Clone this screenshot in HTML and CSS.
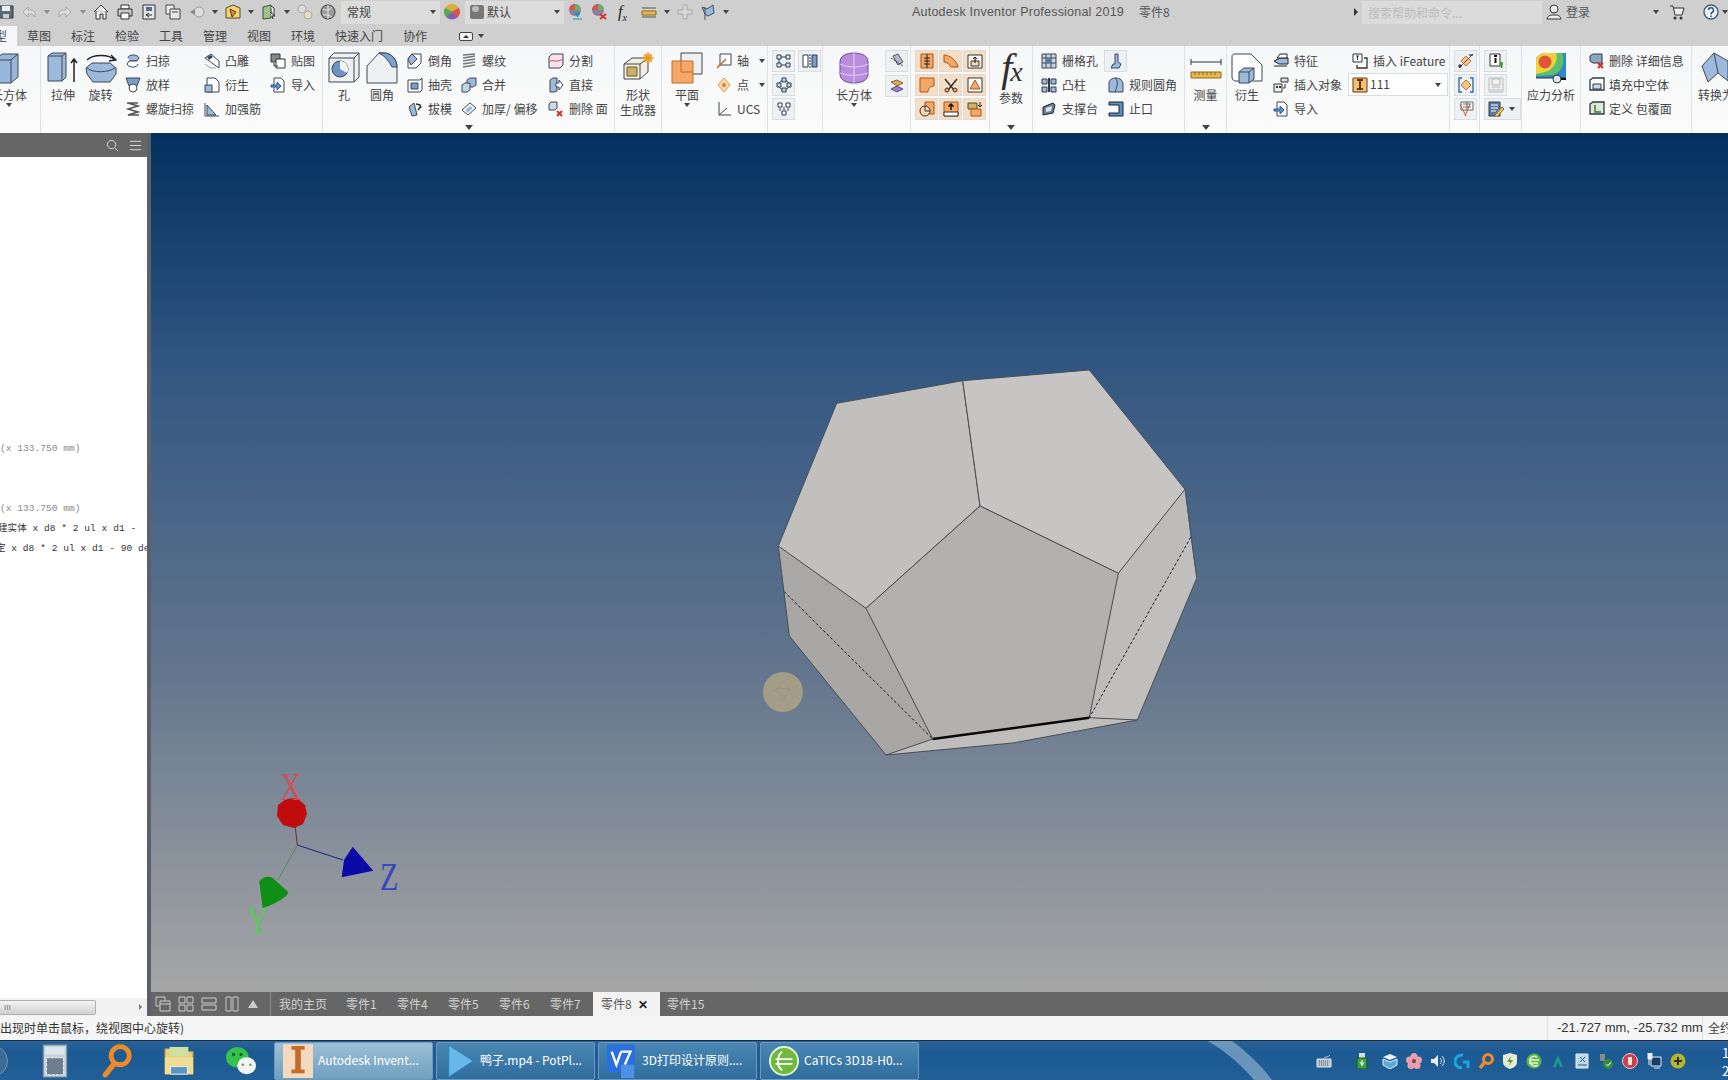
FILE: index.html
```html
<!DOCTYPE html>
<html lang="zh">
<head>
<meta charset="utf-8">
<title>Autodesk Inventor Professional 2019</title>
<link rel="stylesheet" href="styles.css">
</head>
<body>
<svg class="defs" xmlns="http://www.w3.org/2000/svg">
<defs>
<symbol id="save" viewBox="0 0 16 16"><path d="M1 2h14v12H1z" fill="#5d6a78" stroke="#333"/><path d="M4 2h8v5H4z" fill="#eee"/><path d="M5 10h6v4H5z" fill="#ccc"/></symbol>
<symbol id="undo" viewBox="0 0 16 16"><path d="M7 3L2 8l5 5v-3h4l3 3V8l-3-2H7z" fill="#ddd" stroke="#a9a9a9"/></symbol>
<symbol id="redo" viewBox="0 0 16 16"><path d="M9 3l5 5-5 5v-3H5l-3 3V8l3-2h4z" fill="#ddd" stroke="#a9a9a9"/></symbol>
<symbol id="home" viewBox="0 0 16 16"><path d="M1 8l7-7 7 7M3 7v8h4v-5h3v5h3V7" fill="#eee" stroke="#3b3b3b"/></symbol>
<symbol id="print" viewBox="0 0 16 16"><path d="M4 1h8v4H4z" fill="#fff" stroke="#333"/><path d="M1 5h14v7H1z" fill="#c9c9c9" stroke="#333"/><path d="M4 9h8v6H4z" fill="#fff" stroke="#333"/></symbol>
<symbol id="pages" viewBox="0 0 16 16"><path d="M2 1h12v14H2z" fill="#e6e6e6" stroke="#333"/><path d="M5 3h6v4H5z" fill="#4c7096"/><path d="M5 11h6M8 9l-3 2 3 2" fill="none" stroke="#333"/></symbol>
<symbol id="copies" viewBox="0 0 16 16"><path d="M1 1h8v9H1z" fill="#eee" stroke="#444"/><path d="M5 5h10v10H5z" fill="#e6e6e6" stroke="#444"/><path d="M7 8h6" stroke="#444"/></symbol>
<symbol id="orbit" viewBox="0 0 16 16"><circle cx="10" cy="8" r="5" fill="#ddd" stroke="#999"/><path d="M1 8l5-3v6z" fill="#888"/></symbol>
<symbol id="open" viewBox="0 0 16 16"><path d="M1 4l7-3 7 3v10H1z" fill="#f2d37a" stroke="#5d4a20"/><path d="M5 5l6 3-4 5z" fill="#e6892e" stroke="#5d3a10"/></symbol>
<symbol id="docs" viewBox="0 0 16 16"><path d="M2 3l8-2v13l-8 1z" fill="#9fc38a" stroke="#3c4d36"/><path d="M10 2l3 2v8M9 8l5 4-3 0 1 3" fill="#fff" stroke="#333"/></symbol>
<symbol id="nodes" viewBox="0 0 16 16"><circle cx="5" cy="5" r="4" fill="#ddd" stroke="#aaa"/><circle cx="11" cy="11" r="4" fill="#e6e0c6" stroke="#aaa"/></symbol>
<symbol id="globe" viewBox="0 0 16 16"><circle cx="8" cy="8" r="7" fill="#9a9a9a" stroke="#333"/><path d="M3 5c3 2 7 1 9-2M3 11c3-1 7 1 9 2M8 1v14" fill="none" stroke="#e8e8e8"/></symbol>
<symbol id="wheel" viewBox="0 0 16 16"><circle cx="8" cy="8" r="7.500" fill="#7c62b5"/><path d="M8 8L1 4a8 8 0 0 1 14 0z" fill="#d8b03e"/><path d="M8 8l7-4a8 8 0 0 1-2 10z" fill="#d9524c"/><path d="M8 8L1 4a8 8 0 0 0 1 9z" fill="#58a85a"/></symbol>
<symbol id="sphere" viewBox="0 0 16 16"><rect x="1" y="1" width="14" height="14" rx="2" fill="#777"/><rect x="3" y="2" width="7" height="6" rx="3" fill="#bbb"/></symbol>
<symbol id="ball" viewBox="0 0 16 16"><circle cx="7" cy="6" r="6" fill="#8a7fa0"/><path d="M1 6a6 6 0 0 1 6-6v6z" fill="#d9524c"/><path d="M7 0a6 6 0 0 1 6 6H7z" fill="#6bb06a"/><path d="M7 9l5 0-2.500 4zM5 15h9" fill="#2a8fb0" stroke="#2a8fb0"/></symbol>
<symbol id="ballx" viewBox="0 0 16 16"><circle cx="7" cy="6" r="6" fill="#8a7fa0"/><path d="M1 6a6 6 0 0 1 6-6v6z" fill="#d9524c"/><path d="M7 0a6 6 0 0 1 6 6H7z" fill="#6bb06a"/><path d="M9 10l6 5M15 10l-6 5" stroke="#d43030" stroke-width="2"/></symbol>
<symbol id="rule" viewBox="0 0 16 16"><path d="M1 4h14M1 13h14" stroke="#555"/><path d="M1 7h14v4H1z" fill="#e7b94d" stroke="#8a6a20"/></symbol>
<symbol id="plus" viewBox="0 0 16 16"><path d="M6 1h4v5h5v4h-5v5H6v-5H1V6h5z" fill="#d8d8d8" stroke="#a7a7a7"/></symbol>
<symbol id="flag" viewBox="0 0 16 16"><path d="M2 3l5 2 6-4 1 8-6 3-3-2z" fill="#9dbbdb" stroke="#3e4f60"/><path d="M5 3v13" stroke="#3e4f60"/></symbol>
<symbol id="user" viewBox="0 0 16 16"><circle cx="8" cy="5" r="4" fill="#eee" stroke="#333"/><path d="M1 15c1-4 4-4 7-4s6 0 7 4z" fill="#eee" stroke="#333"/></symbol>
<symbol id="cart" viewBox="0 0 16 16"><path d="M1 2h3l2 9h7l2-7H5" fill="#eee" stroke="#333"/><circle cx="6" cy="14" r="1.500" fill="#333"/><circle cx="12" cy="14" r="1.500" fill="#333"/></symbol>
<symbol id="help" viewBox="0 0 16 16"><circle cx="8" cy="8" r="7" fill="#eef3f8" stroke="#3f5a78" stroke-width="1.400"/><path d="M5.500 6a2.500 2.500 0 1 1 3.500 2.500c-1 .5-1 1-1 2" fill="none" stroke="#2a517c" stroke-width="1.500"/><path d="M8 11.500v1.500" stroke="#2a517c" stroke-width="1.500"/></symbol>
<symbol id="sweep" viewBox="0 0 16 16"><path d="M3 5c0-4 10-4 11 0l-2 3H5" fill="#9db9dc" stroke="#3d4753"/><path d="M13 11c0 4-10 4-11 0l2-3h8" fill="#fff" stroke="#3d4753"/></symbol>
<symbol id="loft" viewBox="0 0 16 16"><path d="M1 1h14l-3 8H4z" fill="#7d9dc8" stroke="#3d4753"/><circle cx="8" cy="11" r="4" fill="#fff" stroke="#3d4753"/></symbol>
<symbol id="coil" viewBox="0 0 16 16"><path d="M2 2h11M3 2l10 3-10 3 10 3-10 3h11" fill="none" stroke="#555" stroke-width="1.500"/></symbol>
<symbol id="emboss" viewBox="0 0 16 16"><path d="M1 5l6-4 8 7v7z" fill="#fff" stroke="#3d4753"/><path d="M3 4l4-2 2 2-4 3z" fill="#34495f"/><path d="M1 11l5 4h6" fill="#dfe7f0" stroke="#aaa"/></symbol>
<symbol id="derive" viewBox="0 0 16 16"><path d="M3 1h8l4 4v10H3z" fill="#fff" stroke="#3d4753"/><path d="M1 8h7v7H1z" fill="#9db9dc" stroke="#3d4753"/></symbol>
<symbol id="rib" viewBox="0 0 16 16"><path d="M1 2v13h14" fill="#fff" stroke="#3d4753"/><path d="M3 14V4l9 10z" fill="#9db9dc" stroke="#3d4753"/></symbol>
<symbol id="decal" viewBox="0 0 16 16"><path d="M1 1h9v8H1z" fill="#888" stroke="#333"/><path d="M6 6h9v9H6z" fill="#fff" stroke="#333"/><path d="M4 10v3h4" fill="none" stroke="#333"/></symbol>
<symbol id="import" viewBox="0 0 16 16"><path d="M4 1h7l3 3v11H4z" fill="#fff" stroke="#3d4753"/><path d="M1 8h6V5l4 4-4 4v-3H1z" fill="#5a90cc" stroke="#2c5a8e"/></symbol>
<symbol id="chamfer" viewBox="0 0 16 16"><path d="M5 1h9v9l-5 5H1V6z" fill="#fff" stroke="#3d4753"/><path d="M5 1l5 5-6 6-3-6z" fill="#9db9dc" stroke="#3d4753"/></symbol>
<symbol id="shell" viewBox="0 0 16 16"><path d="M1 3h12l2-2v12l-2 2H1z" fill="#fff" stroke="#3d4753"/><path d="M4 6h7v6H4z" fill="#7d9dc8" stroke="#3d4753"/></symbol>
<symbol id="draft" viewBox="0 0 16 16"><path d="M2 6l5-4 3 12-5 1z" fill="#9db9dc" stroke="#3d4753"/><path d="M11 9l3-4M9 3l4 1 1 3" fill="none" stroke="#333" stroke-width="1.500"/></symbol>
<symbol id="thread" viewBox="0 0 16 16"><path d="M2 2l12-1M2 5l12-2M2 8l12-2M2 11l12-2M2 14l12-2" stroke="#777" stroke-width="1.500"/></symbol>
<symbol id="combine" viewBox="0 0 16 16"><path d="M6 3l3-2h6v7l-3 2H6z" fill="#9db9dc" stroke="#3d4753"/><path d="M1 8l3-2h5v7l-3 2H1z" fill="#c2d4ea" stroke="#3d4753"/></symbol>
<symbol id="thick" viewBox="0 0 16 16"><path d="M1 9l8-7 6 5-8 7z" fill="#fff" stroke="#3d4753"/><path d="M4 9l5-4 3 2-5 5z" fill="#9db9dc"/></symbol>
<symbol id="split" viewBox="0 0 16 16"><path d="M1 4l3-3h11v11l-3 3H1z" fill="#f6e3ea" stroke="#3d4753"/><path d="M1 9c4-4 6 2 14-3" fill="none" stroke="#c0506a"/></symbol>
<symbol id="direct" viewBox="0 0 16 16"><path d="M2 3l3-2h4v13l-3 1H2z" fill="#9db9dc" stroke="#3d4753"/><path d="M8 6h3V3l4 5-4 5v-3H8z" fill="#fff" stroke="#3d4753"/></symbol>
<symbol id="delface" viewBox="0 0 16 16"><path d="M1 3l2-2h6v6l-2 2H1z" fill="#c9d8ea" stroke="#3d4753"/><path d="M9 10l5 5M14 10l-5 5" stroke="#d43030" stroke-width="2"/></symbol>
<symbol id="axis" viewBox="0 0 16 16"><path d="M4 1h11v11H4z" fill="#fff" stroke="#3d4753"/><path d="M1 15l9-9" stroke="#c9622a" stroke-width="1.500"/></symbol>
<symbol id="point" viewBox="0 0 16 16"><path d="M8 1l6 7-6 7-6-7z" fill="#fad9b2" stroke="#e39a4a"/><circle cx="8" cy="8" r="2" fill="#d9822e"/></symbol>
<symbol id="ucs" viewBox="0 0 16 16"><path d="M3 1v13h12M3 14l8-7" fill="none" stroke="#3d4753"/></symbol>
<symbol id="grid" viewBox="0 0 16 16"><path d="M1 1h14v14H1z" fill="#c9d4e2" stroke="#3d4753"/><path d="M1 5h14M1 10h14M5 1v14M10 1v14" stroke="#3d4753"/><path d="M5 5h5v5H5z" fill="#5a7aa6"/></symbol>
<symbol id="boss" viewBox="0 0 16 16"><path d="M1 2h5v5H1zM10 2h5v5h-5zM1 10h5v5H1zM10 10h5v5h-5z" fill="#9db9dc" stroke="#2e3b4a"/><path d="M8 1v14" stroke="#2e3b4a" stroke-width="2"/></symbol>
<symbol id="rest" viewBox="0 0 16 16"><path d="M2 6l10-4 2 2-2 8-10 2z" fill="#6c7f96" stroke="#222"/><path d="M5 7l6-2-1 5-5 1z" fill="#dfe7f0"/></symbol>
<symbol id="rule2" viewBox="0 0 16 16"><path d="M1 6c0-3 3-5 7-5s7 3 7 6v8H1z" fill="#9db9dc" stroke="#3d4753"/><path d="M7 1c3 2 3 7 0 14" fill="none" stroke="#3d4753"/></symbol>
<symbol id="lip" viewBox="0 0 16 16"><path d="M1 1h14v14H1v-3h10V4H1z" fill="#5a90cc" stroke="#222"/></symbol>
<symbol id="hand" viewBox="0 0 16 16"><path d="M7 1h3v8l3 2-2 4H3l2-4h2z" fill="#9db9dc" stroke="#2d4b6d"/></symbol>
<symbol id="feat" viewBox="0 0 16 16"><path d="M1 8l6-3h8v6H6z" fill="#9db9dc" stroke="#222"/><path d="M4 5l3-4h7v4z" fill="#fff" stroke="#222"/><path d="M1 13h13" stroke="#222"/></symbol>
<symbol id="insobj" viewBox="0 0 16 16"><path d="M1 7h8v8H1z" fill="#eee" stroke="#333"/><path d="M3 9h2v2H3zM6 9h2v2H6z" fill="#333"/><path d="M8 1h7v4H8z" fill="#ddd" stroke="#333"/><path d="M12 7v4h-2" fill="none" stroke="#333"/></symbol>
<symbol id="ifeat" viewBox="0 0 16 16"><path d="M1 1h9v8H1z" fill="#fff" stroke="#333"/><path d="M4 3h3M5.500 3v4" stroke="#333"/><path d="M12 5h3v10H5v-3" fill="none" stroke="#333" stroke-width="1.300"/></symbol>
<symbol id="doc-i" viewBox="0 0 16 16"><path d="M1 1h14v14H1z" fill="#f2c079" stroke="#5d3a10"/><path d="M5 3h6M8 3v9M5 12h6" stroke="#6b3a15" stroke-width="2"/></symbol>
<symbol id="delinfo" viewBox="0 0 16 16"><path d="M1 3l3-2h9v9H4L1 8z" fill="#8fa6bf" stroke="#2e3b4a"/><path d="M9 10l5 5M14 10l-5 5" stroke="#d43030" stroke-width="2"/></symbol>
<symbol id="fill" viewBox="0 0 16 16"><path d="M1 3l3-2h11v12H1z" fill="#fff" stroke="#2e3b4a" stroke-width="1.300"/><path d="M4 7h8v5H4z" fill="#c9d8ea" stroke="#2e3b4a"/></symbol>
<symbol id="wrap" viewBox="0 0 16 16"><path d="M1 3l3-2h11v12H1z" fill="#e0e9d8" stroke="#2e3b4a" stroke-width="1.300"/><path d="M6 4v7h6" fill="none" stroke="#3c7a2d" stroke-width="1.500"/></symbol>
<symbol id="b-box" viewBox="0 0 32 32"><path d="M2 8l7-6h16v23l-7 6H2z" fill="#98b6da" stroke="#3d4753"/><path d="M2 8h16v23M18 8l7-6" fill="none" stroke="#3d4753"/></symbol>
<symbol id="b-ext" viewBox="0 0 32 32"><path d="M1 4l4-3h14v24l-4 4H1z" fill="#9db9dc" stroke="#3d4753"/><path d="M1 4h14v25M15 4l4-3" fill="none" stroke="#3d4753"/><path d="M27 30V8M24 11l3-4 3 4" fill="none" stroke="#222" stroke-width="1.500"/></symbol>
<symbol id="b-rev" viewBox="0 0 32 32"><path d="M1 16l6-5h18l6 5v6l-6 8H8l-6-8z" fill="#9db9dc" stroke="#3d4753"/><path d="M2 16c6 5 20 5 28 0" fill="none" stroke="#3d4753"/><path d="M2 8c6-6 22-6 28 0M26 3l5 5-7 1" fill="none" stroke="#222" stroke-width="1.300"/></symbol>
<symbol id="b-hole" viewBox="0 0 32 32"><path d="M1 6l5-5h25v24l-5 5H1z" fill="#eef0f3" stroke="#3d4753"/><path d="M1 6h25v24M26 6l5-5" fill="none" stroke="#3d4753"/><circle cx="12" cy="17" r="8" fill="#6f94c4" stroke="#3d4753"/><path d="M12 17V9a8 8 0 0 1 7 12z" fill="#f0f3f7"/></symbol>
<symbol id="b-fil" viewBox="0 0 32 32"><path d="M1 14L13 1h5c7 0 13 6 13 14v16H1z" fill="#eef0f3" stroke="#3d4753"/><path d="M13 1c6 3 10 8 13 14l5 0c0-8-6-14-13-14z" fill="#7fa3d1" stroke="#3d4753"/></symbol>
<symbol id="b-gen" viewBox="0 0 32 32"><path d="M2 12l8-6h16v14l-8 7H2z" fill="#f2efe0" stroke="#3d4753"/><path d="M2 12h16v15M18 12l8-6" fill="none" stroke="#3d4753"/><path d="M5 15h10v9H5z" fill="#c9b26a" stroke="#6a5a20"/><circle cx="26" cy="6" r="4.500" fill="#f5b13e"/><path d="M26 0v12M20 6h12M22 2l8 8M30 2l-8 8" stroke="#e8902a"/></symbol>
<symbol id="b-plane" viewBox="0 0 32 32"><path d="M10 1h21v21H10z" fill="#eef0f3" stroke="#3d4753"/><path d="M1 9h21v22H1z" fill="#f3a869" stroke="#c36f2a"/><path d="M10 9v11h12" fill="none" stroke="#c36f2a"/></symbol>
<symbol id="b-prim" viewBox="0 0 32 32"><path d="M2 10c0-6 6-9 14-9s14 3 14 9v12c0 6-6 9-14 9s-14-3-14-9z" fill="#b98ddd" stroke="#6b4a90"/><path d="M2 12c8 4 20 4 28 0M2 21c8 3 20 3 28 0M16 1v30" fill="none" stroke="#e6d2f3"/></symbol>
<symbol id="b-meas" viewBox="0 0 32 32"><path d="M1 10h30M1 7v6M31 7v6" stroke="#333" fill="none"/><path d="M1 20h30v6H1z" fill="#e6b84c" stroke="#8a6a20"/><path d="M5 20v3M9 20v3M13 20v3M17 20v3M21 20v3M25 20v3" stroke="#8a6a20"/></symbol>
<symbol id="b-der" viewBox="0 0 32 32"><path d="M1 5c0-2 1-3 3-3h16l11 11v16H5c-2 0-4-1-4-4z" fill="#fff" stroke="#3d4753"/><path d="M8 20l5-4h10v11l-5 4H8z" fill="#9db9dc" stroke="#3d4753"/><path d="M8 20h10v11M18 20l5-4" fill="none" stroke="#3d4753"/></symbol>
<symbol id="b-str" viewBox="0 0 32 32"><path d="M1 6l6-5h24v25H1z" fill="#2f86c9"/><path d="M1 24V6l6-5h20c4 8 0 18-8 22z" fill="#5cc06a"/><path d="M1 22V6l6-5h14c3 7-3 17-11 19z" fill="#ecd23c"/><circle cx="10" cy="10" r="6.500" fill="#e2543a"/><path d="M1 26h30" stroke="#333"/><circle cx="22" cy="27" r="4" fill="#dfe7f0" stroke="#333"/><path d="M26 27h5" stroke="#111" stroke-width="2"/></symbol>
<symbol id="b-conv" viewBox="0 0 32 32"><path d="M2 14L14 1l14 8v20l-10-8-10 9z" fill="#9db9dc" stroke="#3d4753"/><path d="M14 1l4 20" stroke="#3d4753"/></symbol>
<symbol id="t-a" viewBox="0 0 16 16"><path d="M1 2h4v4H1zM10 2h4v4h-4zM1 10h4v4H1zM10 10h4v4h-4z" fill="#dfe7f0" stroke="#2e3b4a"/><path d="M5 4h5M3 6v4M5 12h5" stroke="#2e3b4a"/></symbol>
<symbol id="t-b" viewBox="0 0 16 16"><path d="M1 2h5v12H1z" fill="#fff" stroke="#2e3b4a"/><path d="M10 2h5v12h-5z" fill="#7d9dc8" stroke="#2e3b4a"/><path d="M8 1v14" stroke="#2e3b4a" stroke-dasharray="2 1"/></symbol>
<symbol id="t-c" viewBox="0 0 16 16"><circle cx="8" cy="8" r="5" fill="none" stroke="#2e3b4a"/><path d="M6 1h4v4H6zM1 6h4v4H1zM11 6h4v4h-4zM6 11h4v4H6z" fill="#c2d4ea" stroke="#2e3b4a"/></symbol>
<symbol id="t-d" viewBox="0 0 16 16"><path d="M2 2h4v4H2zM10 2h4v4h-4zM6 10h4v4H6z" fill="#fff" stroke="#2e3b4a"/><path d="M4 7v3M12 7v3M8 6v3" stroke="#2e3b4a"/></symbol>
<symbol id="t-e" viewBox="0 0 16 16"><path d="M4 3l5-2 5 8-5 3z" fill="#b9b3d8" stroke="#555"/><path d="M2 5l12 8" stroke="#333" stroke-dasharray="2 1"/></symbol>
<symbol id="t-f" viewBox="0 0 16 16"><path d="M2 4l6-2 6 3-6 3z" fill="#d8a85c" stroke="#8a6a20"/><path d="M2 11l6-3 6 3-6 3z" fill="#9a80c8" stroke="#5d4a80"/></symbol>
<symbol id="g1" viewBox="0 0 16 16"><path d="M2 1h12v14H2z" fill="#f3a869" stroke="#a5591a"/><path d="M8 1v14M5 5h6M5 8h6M5 11h6" stroke="#222"/></symbol>
<symbol id="g2" viewBox="0 0 16 16"><path d="M1 2c6 0 13 6 14 12H8c-1-2-4-5-7-5z" fill="#f3a869" stroke="#a5591a"/></symbol>
<symbol id="g3" viewBox="0 0 16 16"><path d="M1 2h14v13H1z" fill="#fff" stroke="#333"/><path d="M4 8h8v5H4z" fill="#fad9b2" stroke="#333"/><path d="M8 10V4M6 6l2-2 2 2" fill="none" stroke="#111"/></symbol>
<symbol id="g4" viewBox="0 0 16 16"><path d="M1 1h14v8c-3 0-6 2-6 6H1z" fill="#f3a869" stroke="#a5591a"/></symbol>
<symbol id="g5" viewBox="0 0 16 16"><path d="M2 2l9 11M14 2L5 13" stroke="#333" stroke-width="1.500"/><circle cx="4" cy="13" r="2" fill="#f3a869" stroke="#333"/><circle cx="12" cy="13" r="2" fill="#f3a869" stroke="#333"/></symbol>
<symbol id="g6" viewBox="0 0 16 16"><path d="M1 1h14v14H1z" fill="#fff" stroke="#333"/><path d="M8 3l5 9H3z" fill="#f3a869" stroke="#a5591a"/></symbol>
<symbol id="g7" viewBox="0 0 16 16"><path d="M6 1h9v12H6z" fill="#f3a869" stroke="#a5591a"/><circle cx="6" cy="10" r="5" fill="#fad9b2" stroke="#333"/><path d="M6 5v5h5" stroke="#333" fill="none"/></symbol>
<symbol id="g8" viewBox="0 0 16 16"><path d="M1 1h14v14H1z" fill="#f3a869" stroke="#a5591a"/><path d="M1 11h14V15H1z" fill="#fff" stroke="#333"/><path d="M8 9V3M5.500 5.500L8 3l2.500 2.500" stroke="#111" fill="none" stroke-width="1.500"/></symbol>
<symbol id="g9" viewBox="0 0 16 16"><path d="M1 2h9v6H1z" fill="#c9b26a" stroke="#5d4a20"/><path d="M4 8h10v7H4z" fill="#f3a869" stroke="#a5591a"/><path d="M13 1v5M11 4l2 2 2-2" stroke="#222" fill="none"/></symbol>
<symbol id="h1" viewBox="0 0 16 16"><path d="M8 3l5 5-5 5-5-5z" fill="#f3c48a" stroke="#c36f2a"/><path d="M1 15l14-14" stroke="#555"/><path d="M2 11v4M0 13h4M11 2h4" stroke="#111"/></symbol>
<symbol id="h2" viewBox="0 0 16 16"><path d="M8 3l5 5-5 5-5-5z" fill="#f3c48a" stroke="#c36f2a"/><path d="M4 1H1v14h3M12 1h3v14h-3" fill="none" stroke="#2a64a0" stroke-width="1.300"/></symbol>
<symbol id="h3" viewBox="0 0 16 16"><path d="M3 1h12v8H3z" fill="#fff" stroke="#666"/><path d="M5 3h8M5 6h8M9 1v8" stroke="#666"/><path d="M2 3l6 12M12 3L7 15" stroke="#c9622a"/></symbol>
<symbol id="h4" viewBox="0 0 16 16"><path d="M2 1h10v12H2z" fill="#fff" stroke="#333"/><path d="M6 3h3M7.500 5v5" stroke="#111" stroke-width="2"/><path d="M12 11h3M13.500 9v6" stroke="#3a9a2a" stroke-width="2"/></symbol>
<symbol id="h5" viewBox="0 0 16 16"><path d="M1 1h14v14H1z" fill="#eee" stroke="#bbb"/><path d="M4 2h8v6H4zM4 10h8M2 13h12" fill="none" stroke="#bbb"/></symbol>
<symbol id="h6" viewBox="0 0 16 16"><path d="M1 1h11v14H1z" fill="#5a7aa6" stroke="#2e3b4a"/><path d="M3 4h7M3 7h7M3 10h5" stroke="#fff"/><path d="M7 14l7-8 2 2-7 8H7z" fill="#f0c36a" stroke="#8a6a20"/></symbol>
<symbol id="tb1" viewBox="0 0 16 16"><path d="M1 1h9v9H1z" fill="none" stroke="#ccc"/><path d="M5 5h10v10H5z" fill="#666" stroke="#ccc"/><path d="M5 8h10" stroke="#ccc"/></symbol>
<symbol id="tb2" viewBox="0 0 16 16"><path d="M1 1h6v6H1zM9 1h6v6H9zM1 9h6v6H1zM9 9h6v6H9z" fill="none" stroke="#ccc"/></symbol>
<symbol id="tb3" viewBox="0 0 16 16"><path d="M1 2h14v5H1zM1 9h14v5H1z" fill="none" stroke="#ccc"/></symbol>
<symbol id="tb4" viewBox="0 0 16 16"><path d="M2 1h5v14H2zM9 1h5v14H9z" fill="none" stroke="#ccc"/></symbol>
<symbol id="calc" viewBox="0 0 24 32"><path d="M1 1h22v30H1z" fill="#c7d3dd" stroke="#7e8d99"/><path d="M3 3h18v7H3z" fill="#dbe7ef"/><path d="M4 13h16v16H4z" fill="#6d7f8e" stroke="#e8edf1" stroke-dasharray="3 1" stroke-width="1"/></symbol>
<symbol id="lens" viewBox="0 0 28 32"><circle cx="17" cy="11" r="8.500" fill="none" stroke="#ef8a26" stroke-width="4.500"/><path d="M11 19L3 29" stroke="#ef8a26" stroke-width="5" stroke-linecap="round"/></symbol>
<symbol id="folder" viewBox="0 0 32 32"><path d="M1 3h12l2 3h16v24H1z" fill="#e9cf80" stroke="#a89550"/><path d="M6 1h20v10H6z" fill="#cfe0a0"/><path d="M1 12h30v18H1z" fill="#f1dc96"/><path d="M7 22h18v8H7z" fill="#5d93c0" stroke="#e8f0f6"/></symbol>
<symbol id="wechat" viewBox="0 0 32 32"><ellipse cx="12" cy="12" rx="12" ry="11" fill="#36c24a"/><ellipse cx="22" cy="21" rx="10" ry="9" fill="#f2f4f2"/><circle cx="8" cy="9" r="1.800" fill="#12652a"/><circle cx="16" cy="9" r="1.800" fill="#12652a"/><circle cx="18" cy="20" r="1.400" fill="#8a8a8a"/><circle cx="26" cy="20" r="1.400" fill="#8a8a8a"/></symbol>
<symbol id="inv" viewBox="0 0 32 36"><path d="M0 0h32v36H0z" fill="#f3d9be"/><path d="M9 2h14v4h-4v21h4v4H9v-4h4V6H9z" fill="#c46a2a"/></symbol>
<symbol id="play" viewBox="0 0 32 36"><path d="M4 1l26 17L4 35z" fill="#69b8ea" stroke="#2d7fc0"/></symbol>
<symbol id="wps" viewBox="0 0 32 36"><rect width="30" height="30" rx="3" fill="#2a6fe0"/><path d="M5 8l5 14 5-14M15 8h10l-6 14" fill="none" stroke="#fff" stroke-width="2.500"/><path d="M15 22h14v14H15z" fill="#4d90e8"/></symbol>
<symbol id="cat" viewBox="0 0 32 32"><circle cx="16" cy="16" r="15" fill="#71b93c" stroke="#e8f3d8" stroke-width="2"/><path d="M7 14h18M7 19h18M14 6c-6 5-6 15 0 20" fill="none" stroke="#fff" stroke-width="2"/></symbol>
<symbol id="kbd" viewBox="0 0 16 16"><path d="M1 6h14v8H1z" fill="#b4c2cd" stroke="#dce5ea"/><path d="M3 8h10M3 10h10M3 12h10" stroke="#5c6b76" stroke-dasharray="1 1"/><path d="M8 6c0-3 4-1 6-4" fill="none" stroke="#c4cdd4"/></symbol>
<symbol id="usb" viewBox="0 0 16 16"><path d="M5 0h6v5H5z" fill="#ddd"/><path d="M3 5h10v11H3z" fill="#3aa040" stroke="#14541a"/><path d="M8 7v6M6 9l2 3 2-3" fill="none" stroke="#fff"/></symbol>
<symbol id="boxes" viewBox="0 0 16 16"><path d="M8 1l7 3-7 3-7-3z" fill="#eaf2f8"/><path d="M1 6l7 3 7-3v6l-7 4-7-4z" fill="#5aa8dc" stroke="#eaf2f8"/></symbol>
<symbol id="flower" viewBox="0 0 16 16"><circle cx="8" cy="3.500" r="3.500" fill="#e8a0ad"/><circle cx="3.500" cy="7" r="3.500" fill="#e8a0ad"/><circle cx="12.500" cy="7" r="3.500" fill="#e8a0ad"/><circle cx="5" cy="12.500" r="3.500" fill="#e8a0ad"/><circle cx="11" cy="12.500" r="3.500" fill="#e8a0ad"/><circle cx="8" cy="8" r="2" fill="#8a3a4a"/></symbol>
<symbol id="spk" viewBox="0 0 16 16"><path d="M1 6h3l4-4v12l-4-4H1z" fill="#e8eef2"/><path d="M10 5c2 2 2 4 0 6M12 3c3 3 3 7 0 10" fill="none" stroke="#e8eef2"/></symbol>
<symbol id="logi" viewBox="0 0 16 16"><path d="M9 2C3 2 1 6 1 9s3 6 7 6" fill="none" stroke="#19a7e0" stroke-width="3"/><path d="M9 9h5v6" fill="none" stroke="#19a7e0" stroke-width="3"/></symbol>
<symbol id="trayl" viewBox="0 0 16 16"><circle cx="10" cy="6" r="4.500" fill="none" stroke="#ef8a26" stroke-width="3"/><path d="M6 10l-4 5" stroke="#ef8a26" stroke-width="3.500"/></symbol>
<symbol id="shield" viewBox="0 0 16 16"><path d="M8 0l7 2v7c0 4-4 6-7 7-3-1-7-3-7-7V2z" fill="#e4ecd8"/><path d="M9 3L5 9h3l-1 4 4-6H8z" fill="#6a9a2a"/></symbol>
<symbol id="ie" viewBox="0 0 16 16"><circle cx="8" cy="8" r="7.500" fill="#5ab84a"/><path d="M3 7h10M3 10h9M11 4C7 2 3 5 4 9s6 5 8 3" fill="none" stroke="#eaf6d8" stroke-width="1.500"/></symbol>
<symbol id="tria" viewBox="0 0 16 16"><path d="M8 2l5 12h-3L8 8l-2 6H3z" fill="#1f9a8e"/></symbol>
<symbol id="xl" viewBox="0 0 16 16"><path d="M2 1h12v14H2z" fill="#bcd7ea" stroke="#e8f1f6"/><path d="M6 4l5 5M11 4L6 9M4 12h9" stroke="#2a5f88"/></symbol>
<symbol id="plug" viewBox="0 0 16 16"><path d="M2 1h5v7H2z" fill="#8a8a8a"/><circle cx="10" cy="11" r="5" fill="#2f8f3a"/><path d="M8 11l2 2 3-4" stroke="#fff" fill="none"/></symbol>
<symbol id="spk2" viewBox="0 0 16 16"><circle cx="8" cy="8" r="7.500" fill="#c8414b" stroke="#f3c9cd"/><path d="M6 4h4v8H6z" fill="#f6dfe1"/></symbol>
<symbol id="net" viewBox="0 0 16 16"><path d="M5 4h10v9H5z" fill="#163f63" stroke="#e8eef2"/><path d="M2 0h4v6H2zM3 6v6M8 15h6" stroke="#e8eef2" fill="#e8eef2"/></symbol>
<symbol id="add" viewBox="0 0 16 16"><circle cx="8" cy="8" r="7.500" fill="#b7b52a"/><path d="M8 4v8M4 8h8" stroke="#26331a" stroke-width="2"/></symbol>
</defs>
</svg>

<div class="app">
  <header class="top">
    <div class="qat">
      <svg class="q first"><use href="#save"/></svg>
      <svg class="q"><use href="#undo"/></svg><i class="caret dim"></i>
      <svg class="q"><use href="#redo"/></svg><i class="caret dim"></i>
      <svg class="q"><use href="#home"/></svg>
      <svg class="q wide"><use href="#print"/></svg>
      <svg class="q"><use href="#pages"/></svg>
      <svg class="q wide"><use href="#copies"/></svg>
      <svg class="q"><use href="#orbit"/></svg><i class="caret"></i>
      <svg class="q"><use href="#open"/></svg><i class="caret"></i>
      <svg class="q"><use href="#docs"/></svg><i class="caret"></i>
      <svg class="q"><use href="#nodes"/></svg>
      <svg class="q"><use href="#globe"/></svg>
      <div class="dd snug"><span>常规</span><i class="caret"></i></div>
      <svg class="q tuck"><use href="#wheel"/></svg>
      <div class="dd snug"><svg class="q"><use href="#sphere"/></svg><span>默认</span><i class="caret"></i></div>
      <svg class="q tuck"><use href="#ball"/></svg>
      <svg class="q"><use href="#ballx"/></svg>
      <span class="fxq">f<sub>x</sub></span>
      <svg class="q"><use href="#rule"/></svg><i class="caret"></i>
      <svg class="q"><use href="#plus"/></svg>
      <svg class="q"><use href="#flag"/></svg><i class="caret"></i>
    </div>
    <div class="title"><span>Autodesk Inventor Professional 2019</span><span>零件8</span></div>
    <div class="assist">
      <i class="tri-r"></i>
      <div class="search">搜索帮助和命令...</div>
      <svg class="q"><use href="#user"/></svg>
      <span class="login">登录</span>
      <i class="caret"></i>
      <svg class="q cart"><use href="#cart"/></svg>
      <svg class="q"><use href="#help"/></svg>
      <i class="caret helpcaret"></i>
    </div>
  </header>

  <nav class="tabs">
    <span class="tab on">型</span>
    <span class="tab">草图</span><span class="tab">标注</span><span class="tab">检验</span><span class="tab">工具</span><span class="tab">管理</span><span class="tab">视图</span><span class="tab">环境</span><span class="tab">快速入门</span><span class="tab">协作</span>
    <span class="tabopt"><i class="optmark"></i></span><i class="caret"></i>
  </nav>

  <section class="ribbon">
    <div class="panel p0"><div class="big"><svg class="b"><use href="#b-box"/></svg><span>长方体</span><i class="caret"></i></div></div>

    <div class="panel p1">
      <div class="big"><svg class="b"><use href="#b-ext"/></svg><span>拉伸</span></div>
      <div class="big"><svg class="b"><use href="#b-rev"/></svg><span>旋转</span></div>
      <div class="col"><div class="sm"><svg class="q"><use href="#sweep"/></svg>扫掠</div><div class="sm"><svg class="q"><use href="#loft"/></svg>放样</div><div class="sm"><svg class="q"><use href="#coil"/></svg>螺旋扫掠</div></div>
      <div class="col"><div class="sm"><svg class="q"><use href="#emboss"/></svg>凸雕</div><div class="sm"><svg class="q"><use href="#derive"/></svg>衍生</div><div class="sm"><svg class="q"><use href="#rib"/></svg>加强筋</div></div>
      <div class="col"><div class="sm"><svg class="q"><use href="#decal"/></svg>贴图</div><div class="sm"><svg class="q"><use href="#import"/></svg>导入</div></div>
    </div>

    <div class="panel p2">
      <div class="big"><svg class="b"><use href="#b-hole"/></svg><span>孔</span></div>
      <div class="big"><svg class="b"><use href="#b-fil"/></svg><span>圆角</span></div>
      <div class="col"><div class="sm"><svg class="q"><use href="#chamfer"/></svg>倒角</div><div class="sm"><svg class="q"><use href="#shell"/></svg>抽壳</div><div class="sm"><svg class="q"><use href="#draft"/></svg>拔模</div></div>
      <div class="col"><div class="sm"><svg class="q"><use href="#thread"/></svg>螺纹</div><div class="sm"><svg class="q"><use href="#combine"/></svg>合并</div><div class="sm"><svg class="q"><use href="#thick"/></svg>加厚/ 偏移</div></div>
      <div class="col"><div class="sm"><svg class="q"><use href="#split"/></svg>分割</div><div class="sm"><svg class="q"><use href="#direct"/></svg>直接</div><div class="sm"><svg class="q"><use href="#delface"/></svg>删除 面</div></div>
      <i class="more"></i>
    </div>

    <div class="panel p3"><div class="big"><svg class="b"><use href="#b-gen"/></svg><span class="two">形状<br>生成器</span></div></div>

    <div class="panel p4">
      <div class="big"><svg class="b"><use href="#b-plane"/></svg><span>平面</span><i class="caret"></i></div>
      <div class="col"><div class="sm"><svg class="q"><use href="#axis"/></svg>轴<i class="caret push"></i></div><div class="sm"><svg class="q"><use href="#point"/></svg>点<i class="caret push"></i></div><div class="sm"><svg class="q"><use href="#ucs"/></svg>UCS</div></div>
    </div>

    <div class="panel p5">
      <div class="tb"><svg class="q"><use href="#t-a"/></svg></div><div class="tb"><svg class="q"><use href="#t-b"/></svg></div>
      <div class="tb"><svg class="q"><use href="#t-c"/></svg></div><div></div>
      <div class="tb"><svg class="q"><use href="#t-d"/></svg></div>
    </div>

    <div class="panel p6">
      <div class="big"><svg class="b"><use href="#b-prim"/></svg><span>长方体</span><i class="caret"></i></div>
      <div class="stack"><div class="tb"><svg class="q"><use href="#t-e"/></svg></div><div class="tb"><svg class="q"><use href="#t-f"/></svg></div></div>
    </div>

    <div class="panel p7">
      <div class="tb o"><svg class="q"><use href="#g1"/></svg></div><div class="tb o"><svg class="q"><use href="#g2"/></svg></div><div class="tb o"><svg class="q"><use href="#g3"/></svg></div>
      <div class="tb o"><svg class="q"><use href="#g4"/></svg></div><div class="tb o"><svg class="q"><use href="#g5"/></svg></div><div class="tb o"><svg class="q"><use href="#g6"/></svg></div>
      <div class="tb o"><svg class="q"><use href="#g7"/></svg></div><div class="tb o"><svg class="q"><use href="#g8"/></svg></div><div class="tb o"><svg class="q"><use href="#g9"/></svg></div>
    </div>

    <div class="panel p8"><div class="big"><span class="fxbig">f<em>x</em></span><span>参数</span></div><i class="more"></i></div>

    <div class="panel p9">
      <div class="col"><div class="sm"><svg class="q"><use href="#grid"/></svg>栅格孔</div><div class="sm"><svg class="q"><use href="#boss"/></svg>凸柱</div><div class="sm"><svg class="q"><use href="#rest"/></svg>支撑台</div></div>
      <div class="col"><div class="tb nudge"><svg class="q"><use href="#hand"/></svg></div><div class="sm"><svg class="q"><use href="#rule2"/></svg>规则圆角</div><div class="sm"><svg class="q"><use href="#lip"/></svg>止口</div></div>
    </div>

    <div class="panel p10"><div class="big"><svg class="b"><use href="#b-meas"/></svg><span>测量</span></div><i class="more"></i></div>

    <div class="panel p11">
      <div class="big"><svg class="b"><use href="#b-der"/></svg><span>衍生</span></div>
      <div class="col"><div class="sm"><svg class="q"><use href="#feat"/></svg>特征</div><div class="sm"><svg class="q"><use href="#insobj"/></svg>插入对象</div><div class="sm"><svg class="q"><use href="#import"/></svg>导入</div></div>
      <div class="col"><div class="sm"><svg class="q"><use href="#ifeat"/></svg>插入 iFeature</div><div class="combo"><svg class="q"><use href="#doc-i"/></svg><span>111</span><i class="caret"></i></div></div>
    </div>

    <div class="panel p12"><div class="tb"><svg class="q"><use href="#h1"/></svg></div><div class="tb"><svg class="q"><use href="#h2"/></svg></div><div class="tb"><svg class="q"><use href="#h3"/></svg></div></div>

    <div class="panel p13"><div class="tb"><svg class="q"><use href="#h4"/></svg></div><div class="tb"><svg class="q"><use href="#h5"/></svg></div><div class="tb split"><svg class="q"><use href="#h6"/></svg><i class="caret"></i></div></div>

    <div class="panel p14"><div class="big"><svg class="b"><use href="#b-str"/></svg><span>应力分析</span></div></div>

    <div class="panel p15"><div class="col"><div class="sm"><svg class="q"><use href="#delinfo"/></svg>删除 详细信息</div><div class="sm"><svg class="q"><use href="#fill"/></svg>填充中空体</div><div class="sm"><svg class="q"><use href="#wrap"/></svg>定义 包覆面</div></div></div>

    <div class="panel p16"><div class="big"><svg class="b"><use href="#b-conv"/></svg><span>转换为</span></div></div>
  </section>

  <main class="work">
    <aside class="browser">
      <div class="bhead">
        <svg class="bicon" viewBox="0 0 14 14"><circle cx="6" cy="6" r="4.500" fill="none" stroke="#ddd"/><path d="M9.500 9.500L13 13" stroke="#ddd"/></svg>
        <svg class="bicon" viewBox="0 0 14 14"><path d="M1 2.500h12M1 7h12M1 11.500h12" stroke="#ddd"/></svg>
      </div>
      <div class="tree">
        <div class="ln g">(x 133.750 mm)</div>
        <div class="ln g sec">(x 133.750 mm)</div>
        <div class="ln tight">建实体 x d8 * 2 ul x d1 -</div>
        <div class="ln tight2">定 x d8 * 2 ul x d1 - 90 deg</div>
      </div>
      <div class="hscroll"><div class="thumb"><span>III</span></div><i class="tri-r small"></i></div>
    </aside>

    <div class="view">
      <svg class="scene" viewBox="151 133 1577 859" preserveAspectRatio="none">
        <path d="M778.300 546L866 608.300 932.700 739 784.300 591.700z" fill="#a9a8a6"/>
        <path d="M784.300 591.700L932.700 739 886 755 789.300 636z" fill="#a8a7a5"/>
        <path d="M1185 489.300L1190.700 537.300 1089.300 717.700 1118.300 573.300z" fill="#bdbcba"/>
        <path d="M1190.700 537.300L1196.700 578.300 1137.300 720 1089.300 717.700z" fill="#c0bfbd"/>
        <g stroke="#4a4e54" stroke-width="1" stroke-linejoin="round">
          <path d="M778.300 546L836.700 403.300 962.700 380.700 980 506 866 608.300z" fill="#c1c0be"/>
          <path d="M962.700 380.700L1089.300 370 1185 489.300 1118.300 573.300 980 506z" fill="#c6c5c3"/>
          <path d="M980 506L1118.300 573.300 1089.300 717.700 932.700 739 866 608.300z" fill="#b2b1af"/>
          <path d="M886 755L932.700 739 1089.300 717.700 1137.300 720 1013 743z" fill="#bebdbb"/>
          <path d="M778.300 546L789.300 636 886 755M1185 489.300L1196.700 578.300 1137.300 720" fill="none"/>
        </g>
        <path d="M932.700 739L1089.300 717.700" stroke="#0a0a0a" stroke-width="2.500"/>
        <path class="dash" d="M784.300 591.700L932.700 739M1190.700 537.300L1089.300 717.700"/>
        <circle cx="783" cy="692" r="20" fill="#b3a585" opacity=".8"/>
        <path d="M783 681l6 8-6 12-6-12zM773 692c5-5 15-5 20 0" fill="none" stroke="#9a9484"/>

        <path d="M295 825L297.300 845" stroke="#6d2a2a"/>
        <path d="M297.300 845L343 860" stroke="#16237d"/>
        <path d="M297.300 845L278 880" stroke="#4f8d5a"/>
        <path d="M286 799l11-1 8 7 2 9-4 10-9 4-11-3-6-9 1-11z" fill="#c00c0c"/>
        <path d="M352.700 846.700L373.300 870.700 341.700 877.300 344 860z" fill="#0b0aa8"/>
        <path d="M259.300 881.700Q264 875 272 877.500L288.300 892Q287 899 262.700 908.300z" fill="#0f8f16"/>
        <text class="ax ax-x" x="280" y="800">X</text>
        <text class="ax ax-z" x="380" y="890">Z</text>
        <text class="ax ax-y" x="247" y="934">Y</text>
      </svg>
    </div>
  </main>

  <div class="dochead">
    <div class="docicons">
      <svg class="q"><use href="#tb1"/></svg><svg class="q"><use href="#tb2"/></svg><svg class="q"><use href="#tb3"/></svg><svg class="q"><use href="#tb4"/></svg>
      <i class="tri-u"></i>
    </div>
    <div class="docs">
      <span class="doc">我的主页</span><span class="doc">零件1</span><span class="doc">零件4</span><span class="doc">零件5</span><span class="doc">零件6</span><span class="doc">零件7</span><span class="doc cur">零件8<b>✕</b></span><span class="doc">零件15</span>
    </div>
  </div>

  <div class="status">
    <span class="msg">出现时单击鼠标，绕视图中心旋转)</span>
    <span class="coord">-21.727 mm, -25.732 mm</span>
    <span class="zoomtxt">全约束</span>
  </div>

  <footer class="taskbar">
    <svg class="swoosh" viewBox="0 0 1728 40" preserveAspectRatio="none"><path d="M1208 0h24c16 12 30 26 40 40h-18c-12-15-28-29-46-40z" fill="#a9c4da" opacity=".55"/></svg>
    <i class="orb"></i>
    <div class="pin"><svg class="p1i"><use href="#calc"/></svg></div>
    <div class="pin"><svg class="p1i"><use href="#lens"/></svg></div>
    <div class="pin"><svg class="p1i"><use href="#folder"/></svg></div>
    <div class="pin"><svg class="p1i"><use href="#wechat"/></svg></div>
    <div class="task active"><svg class="ti"><use href="#inv"/></svg><span>Autodesk Invent...</span></div>
    <div class="task"><svg class="ti"><use href="#play"/></svg><span>鸭子.mp4 - PotPl...</span></div>
    <div class="task"><svg class="ti"><use href="#wps"/></svg><span>3D打印设计原则....</span></div>
    <div class="task"><svg class="ti"><use href="#cat"/></svg><span>CaTICs 3D18-H0...</span></div>
    <div class="tray">
      <svg class="q tk"><use href="#kbd"/></svg><svg class="q tu"><use href="#usb"/></svg><svg class="q"><use href="#boxes"/></svg><svg class="q"><use href="#flower"/></svg><svg class="q"><use href="#spk"/></svg><svg class="q"><use href="#logi"/></svg><svg class="q"><use href="#trayl"/></svg><svg class="q"><use href="#shield"/></svg><svg class="q"><use href="#ie"/></svg><svg class="q"><use href="#tria"/></svg><svg class="q"><use href="#xl"/></svg><svg class="q"><use href="#plug"/></svg><svg class="q"><use href="#spk2"/></svg><svg class="q"><use href="#net"/></svg><svg class="q"><use href="#add"/></svg>
    </div>
    <div class="clock">1<br>2</div>
  </footer>
</div>
</body>
</html>
```
FILE: styles.css
```css
* { box-sizing: border-box; }
html, body { margin: 0; padding: 0; height: 100%; overflow: hidden; }
body { font: 12px/1.2 "Noto Sans CJK SC", "Noto Sans", sans-serif; color: #444; }
i { display: block; font-style: normal; flex: none; }
.defs { width: 0; height: 0; display: block; }
.app { width: 1728px; height: 1080px; display: flex; flex-direction: column; overflow: hidden; background: #cfcfcf; }

.q { width: 16px; height: 16px; flex: none; display: block; }
.q.wide { width: 18px; }
.caret { width: 6px; height: 4px; border: 3px solid transparent; border-top: 4px solid #444; border-bottom: 0; }
.caret.dim { border-top-color: #8d8d8d; }

/* title row */
.top { height: 24px; display: flex; align-items: center; flex: none; overflow: hidden; }
.qat { display: flex; align-items: center; gap: 7px; flex: none; }
.q.first { margin-left: -2px; }
.dd { width: 99px; height: 23px; background: #dcdcdc; display: flex; align-items: center; gap: 2px; padding: 0 4px 0 6px; color: #444; }
.dd .q { margin-left: -2px; }
.dd .caret { margin-left: auto; }
.snug { margin-left: -2px; }
.tuck { margin-left: -3px; }
.fxq { width: 16px; margin-left: 4px; font: italic 16px/16px "Liberation Serif", serif; color: #222; }
.fxq sub { font-size: 10px; line-height: 0; }
.title { margin-left: 183px; display: flex; gap: 15px; color: #555; width: 261px; white-space: nowrap; flex: none; }
.title span:first-child { font-family: "Liberation Sans", sans-serif; font-size: 12.500px; letter-spacing: .22px; }
.assist { margin-left: 181px; display: flex; align-items: center; flex: 1; }
.tri-r { width: 4px; height: 8px; border: 4px solid transparent; border-left: 4px solid #333; border-right: 0; }
.search { width: 180px; height: 23px; margin-left: 4px; background: #dbdbdb; color: #bdbdbd; line-height: 23px; padding-left: 6px; margin-right: 4px; }
.login { margin-left: 4px; width: 87px; color: #555; }
.cart { margin-left: 10px; margin-right: 18px; }
.helpcaret { margin-left: 3px; }

/* tabs */
.tabs { height: 20px; margin-top: 2px; display: flex; align-items: center; flex: none; gap: 20px; }
.tab { line-height: 20px; color: #444; white-space: nowrap; flex: none; }
.tab.on { width: 17px; height: 20px; background: #f5f6f7; margin-right: -10px; text-indent: -5px; overflow: hidden; }
.tabopt { width: 14px; height: 9px; border: 1px solid #444; border-radius: 2px; background: #f2f2f2; margin-left: 12px; margin-right: -15px; flex: none; display: flex; align-items: center; justify-content: center; }
.optmark { width: 6px; height: 3px; border: 3px solid transparent; border-bottom: 3px solid #333; border-top: 0; }

/* ribbon */
.ribbon { height: 87px; flex: none; display: flex; background: linear-gradient(#f6f7f8, #fbfbfb); overflow: hidden; }
.panel { flex: none; position: relative; padding-top: 3px; border-right: 1px solid #dfe1e4; display: grid; grid-auto-rows: 24px; align-items: start; overflow: hidden; }
.big { display: flex; flex-direction: column; align-items: center; padding-top: 3px; white-space: nowrap; grid-row: span 3; }
.b { width: 32px; height: 32px; display: block; flex: none; }
.big span { margin-top: 3px; line-height: 16px; }
.big .two { line-height: 15px; margin-top: 3px; text-align: center; }
.col { padding-left: 6px; grid-row: span 3; display: flex; flex-direction: column; white-space: nowrap; }
.sm { height: 24px; display: flex; align-items: center; gap: 5px; }
.push { margin-left: 5px; }
.more { position: absolute; bottom: 3px; left: calc(50% - 4px); width: 8px; height: 5px; border: 4px solid transparent; border-top: 5px solid #444; border-bottom: 0; }
.tb { width: 23px; height: 22px; background: #eef1f4; border: 1px solid #dadde0; display: flex; align-items: center; justify-content: center; margin-top: 1px; }
.tb.o { background: #f5ddc6; border-color: #e2d9cf; }
.stack { grid-row: span 2; display: flex; flex-direction: column; gap: 2px; }
.nudge { margin-left: -4px; margin-bottom: 1px; }
.combo { width: 100px; height: 23px; margin-left: -4px; background: #fff; border: 1px solid #dcdcdc; display: flex; align-items: center; gap: 2px; padding: 0 6px 0 3px; }
.combo .caret { margin-left: auto; }
.split { width: 37px; justify-content: flex-start; padding-left: 3px; gap: 5px; }

.p0 { width: 41px; }
.p0 .big { width: 36px; margin-left: -9px; }
.p1 { width: 282px; padding-left: 3px; grid-template-columns: 38px 37px 79px 66px 1fr; }
.p2 { width: 292px; padding-left: 2px; grid-template-columns: 38px 38px 54px 87px 1fr; }
.p3 { width: 47px; }
.p4 { width: 106px; grid-template-columns: 50px 1fr; }
.p4 .col { padding-left: 4px; }
.p5 { width: 55px; padding-left: 4px; grid-template-columns: 26px 24px; }
.p6 { width: 88px; grid-template-columns: 62px 1fr; }
.p7 { width: 79px; padding-left: 4px; grid-template-columns: repeat(3, 24px); }
.p8 { width: 43px; }
.p9 { width: 152px; padding-left: 2px; grid-template-columns: 67px 1fr; }
.p10 { width: 42px; }
.p11 { width: 223px; grid-template-columns: 40px 79px 1fr; }
.p12 { width: 30px; padding-left: 4px; }
.p13 { width: 42px; padding-left: 4px; }
.p14 { width: 59px; }
.p15 { width: 111px; padding-left: 2px; }
.p15 .sm { gap: 4px; }
.p16 { width: 36px; border-right: 0; padding-left: 6px; }
.big .fxbig { margin-top: 0; height: 35px; font: italic 40px/32px "Liberation Serif", serif; color: #2f2f2f; letter-spacing: -2px; }
.fxbig em { font-size: 28px; }
.p3 .big, .p8 .big, .p10 .big, .p14 .big { width: 100%; }

/* work area */
.work { height: 859px; flex: none; display: flex; }
.browser { width: 151px; height: 883px; flex: none; display: flex; flex-direction: column; background: #fff; border-right: 4px solid #5b6069; overflow: hidden; position: relative; z-index: 1; }
.bhead { height: 24px; flex: none; background: #666; display: flex; align-items: center; justify-content: flex-end; gap: 10px; padding-right: 5px; }
.bicon { width: 13px; height: 13px; display: block; }
.tree { flex: 1; padding-top: 285px; font: 9.600px/14px "Liberation Mono", "Noto Sans CJK SC", monospace; color: #333; overflow: hidden; }
.ln { height: 14px; white-space: nowrap; }
.g { color: #8a8a8a; }
.sec { margin-top: 46px; }
.tight { margin-top: 6px; margin-left: -2px; }
.tight2 { margin-top: 6px; margin-left: -4px; }
.hscroll { height: 18px; flex: none; background: #f1f1f1; display: flex; align-items: center; justify-content: space-between; padding-right: 5px; }
.thumb { width: 96px; height: 15px; border: 1px solid #b0b0b0; border-left: 0; border-radius: 0 2px 2px 0; background: linear-gradient(#f4f4f4, #d0d0d0); font: 8px/13px "Liberation Sans", sans-serif; color: #777; padding-left: 4px; }
.tri-r.small { width: 3px; height: 6px; border-width: 3px; border-left-width: 3px; border-left-color: #777; border-right: 0; }
.view { flex: 1; background: linear-gradient(#02305f 0%, #335782 28%, #62758d 62%, #a6a6a6 100%); }
.scene { width: 100%; height: 100%; display: block; }
.dash { fill: none; stroke: #111; stroke-width: 1; stroke-dasharray: 2.500 2.500; }
.ax { font-family: "Liberation Serif", serif; font-size: 30px; transform-box: fill-box; transform-origin: 50% 80%; transform: scaleY(1.3); }
.ax-x { fill: #c8525e; }
.ax-z { fill: #3547ba; }
.ax-y { fill: #5cc75c; }

/* document tabs */
.dochead { height: 24px; flex: none; margin-left: 151px; background: #666; display: flex; align-items: stretch; }
.docicons { width: 120px; padding-left: 4px; display: flex; align-items: center; gap: 7px; border-right: 1px solid #888; }
.tri-u { width: 10px; height: 8px; border: 5px solid transparent; border-bottom: 8px solid #ccc; border-top: 0; margin-left: 1px; }
.docs { display: flex; padding-left: 8px; }
.doc { width: 51px; line-height: 24px; color: #d2d2d2; white-space: nowrap; flex: none; }
.doc:first-child { width: 67px; }
.doc.cur { width: 67px; background: #f2f2f2; color: #555; padding-left: 8px; margin-left: -8px; margin-right: 7px; }
.doc b { margin-left: 6px; color: #222; font-size: 12px; }

/* status */
.status { height: 24px; flex: none; background: #f5f5f5; display: flex; align-items: center; line-height: 24px; white-space: nowrap; overflow: hidden; }
.msg { width: 1547px; flex: none; color: #333; }
.coord { width: 156px; flex: none; padding-left: 9px; border-left: 1px solid #ddd; border-right: 1px solid #ddd; font-family: "Liberation Sans", sans-serif; font-size: 13px; color: #333; }
.zoomtxt { padding-left: 5px; }

/* taskbar */
.taskbar { height: 40px; flex: none; position: relative; display: flex; align-items: center; padding-left: 24px; background: linear-gradient(#2a6398, #1c5a93 30%, #225f96); border-top: 1px solid #12304e; color: #fff; overflow: hidden; }
.swoosh { position: absolute; inset: 0; width: 100%; height: 100%; pointer-events: none; }
.orb { position: absolute; left: -24px; top: 4px; width: 32px; height: 32px; border-radius: 50%; background: #3a6c96; border: 1px solid #6d94b4; }
.pin { width: 62px; display: flex; justify-content: center; position: relative; }
.p1i { width: 30px; height: 34px; display: block; }
.task { width: 159px; height: 38px; margin-left: 3px; flex: none; display: flex; align-items: center; gap: 5px; padding-left: 8px; border: 1px solid #6d9abc; border-radius: 2px; background: linear-gradient(#4b87b2, #2f6d9e); white-space: nowrap; overflow: hidden; position: relative; }
.task.active { margin-left: 2px; background: linear-gradient(#9cc0d6, #6f9fc0); }
.task span { font-size: 12px; }
.ti { width: 30px; height: 34px; flex: none; display: block; }
.tray { position: absolute; left: 1316px; top: 12px; display: flex; gap: 8px; }
.tk { margin-right: 14px; }
.tu { margin-right: 4px; }
.clock { position: absolute; left: 1722px; top: 3px; line-height: 18px; font-size: 13px; }
```
